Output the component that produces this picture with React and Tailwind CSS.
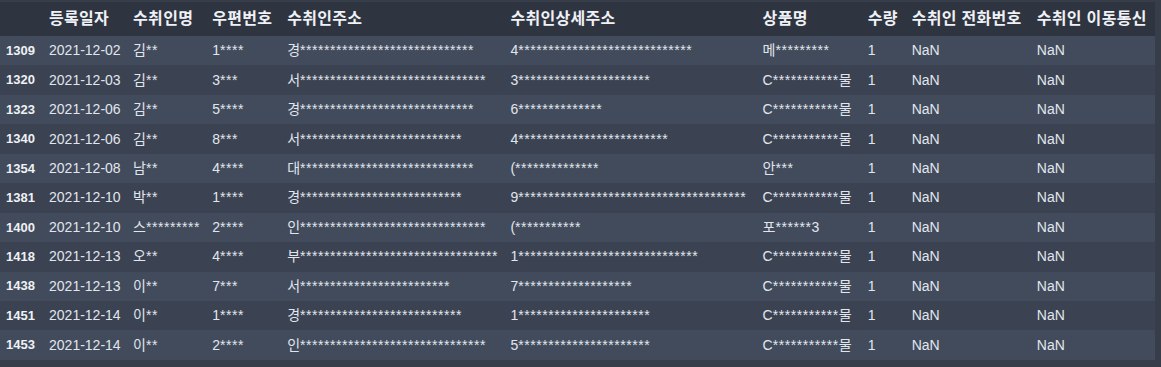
import React from "react";

const s = (n) => "*".repeat(n);
const PROD = "C" + s(11) + "물";

const columns = [
  { name: "", width: 43 },
  { name: "등록일자", width: 84 },
  { name: "수취인명", width: 79 },
  { name: "우편번호", width: 75 },
  { name: "수취인주소", width: 223 },
  { name: "수취인상세주소", width: 252 },
  { name: "상품명", width: 105 },
  { name: "수량", width: 44 },
  { name: "수취인 전화번호", width: 125 },
  { name: "수취인 이동통신", width: 124 },
];

const rows = [
  ["1309", "2021-12-02", "김**", "1****", "경" + s(29), "4" + s(29), "메" + s(9)],
  ["1320", "2021-12-03", "김**", "3***", "서" + s(31), "3" + s(22), PROD],
  ["1323", "2021-12-06", "김**", "5****", "경" + s(29), "6" + s(14), PROD],
  ["1340", "2021-12-06", "김**", "8***", "서" + s(27), "4" + s(25), PROD],
  ["1354", "2021-12-08", "남**", "4****", "대" + s(29), "(" + s(14), "안***"],
  ["1381", "2021-12-10", "박**", "1****", "경" + s(27), "9" + s(38), PROD],
  ["1400", "2021-12-10", "스" + s(9), "2****", "인" + s(31), "(" + s(11), "포" + s(6) + "3"],
  ["1418", "2021-12-13", "오**", "4****", "부" + s(33), "1" + s(30), PROD],
  ["1438", "2021-12-13", "이**", "7***", "서" + s(25), "7" + s(19), PROD],
  ["1451", "2021-12-14", "이**", "1****", "경" + s(27), "1" + s(22), PROD],
  ["1453", "2021-12-14", "이**", "2****", "인" + s(31), "5" + s(22), PROD],
];

// masked values: asterisk runs get a bit of spacing so they match the reference width
function Masked({ value }) {
  const parts = value.split(/(\*+)/).filter(Boolean);
  return parts.map((p, i) =>
    p[0] === "*" ? (
      <span key={i} className="tracking-[0.55px]">
        {p}
      </span>
    ) : (
      <span key={i}>{p}</span>
    )
  );
}

export default function App() {
  return (
    <div
      className="w-[1161px] h-[367px] bg-[#373d49] pt-[2px] overflow-hidden text-[#e1e6ee]"
      style={{ fontFamily: '"Liberation Sans", "Noto Sans CJK KR", sans-serif' }}
    >
      <table className="table-fixed border-collapse w-[1155px]">
        <colgroup>
          {columns.map((c, i) => (
            <col key={i} style={{ width: c.width }} />
          ))}
        </colgroup>
        <thead>
          <tr className="bg-[#2e3440] h-[34px]">
            {columns.map((c, i) => (
              <th
                key={i}
                className="pl-[6px] text-left text-[16px] tracking-[0.3px] font-bold text-[#eef1f5] whitespace-nowrap"
              >
                {c.name}
              </th>
            ))}
          </tr>
        </thead>
        <tbody>
          {rows.map((r, i) => (
            <tr
              key={r[0]}
              className={`h-[29.45px] ${i % 2 === 0 ? "bg-[#424b5b]" : "bg-[#3b4251]"}`}
            >
              <th className="pl-[6px] text-left text-[13px] font-bold text-[#eef1f5]">
                {r[0]}
              </th>
              {r.slice(1).map((v, j) => (
                <td key={j} className="pl-[6px] text-[14px] whitespace-nowrap overflow-hidden">
                  <Masked value={v} />
                </td>
              ))}
              <td className="pl-[6px] text-[14px]">1</td>
              <td className="pl-[6px] text-[14px]">NaN</td>
              <td className="pl-[6px] text-[14px]">NaN</td>
            </tr>
          ))}
        </tbody>
      </table>
    </div>
  );
}
